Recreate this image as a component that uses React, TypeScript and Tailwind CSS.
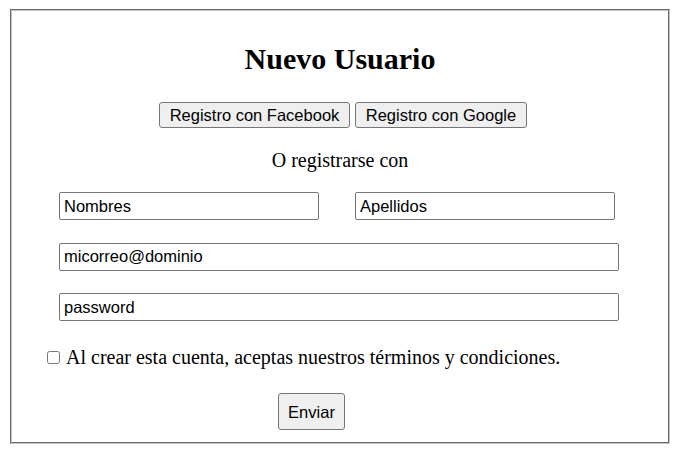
import * as React from 'react';

const sans = "font-['Liberation_Sans',Arial,sans-serif]";
const serif = "font-['Liberation_Serif','Times_New_Roman',serif]";

function Field({ placeholder, className = '' }: { placeholder: string; className?: string }) {
  return (
    <input
      type="text"
      defaultValue={placeholder}
      className={`h-[28px] border border-[#767676] rounded-[2px] bg-white px-[4px] text-[16.5px] text-black outline-none ${sans} ${className}`}
    />
  );
}

function GrayButton({ children, className = '' }: React.PropsWithChildren<{ className?: string }>) {
  return (
    <button
      type="button"
      className={`border border-[#767676] rounded-[3px] bg-[#efefef] text-[16.5px] text-black leading-[18px] px-0 ${sans} ${className}`}
    >
      {children}
    </button>
  );
}

export default function App() {
  return (
    <div className="bg-white w-[683px] h-[454px] pt-[9px] pl-[10px]">
      <form
        className={`w-[660px] h-[435px] border-2 [border-style:groove] border-[#c0c0c0] flex flex-col ${serif} text-black`}
        onSubmit={(e) => e.preventDefault()}
      >
        <h1 className="mt-[30px] text-center text-[30px] leading-[35px] font-bold">Nuevo Usuario</h1>

        <div className="mt-[26px] flex justify-center gap-[5px] pl-[6px]">
          <GrayButton className="h-[26px] w-[191px]">Registro con Facebook</GrayButton>
          <GrayButton className="h-[26px] w-[172px]">Registro con Google</GrayButton>
        </div>

        <p className="mt-[21px] text-center text-[20px] leading-[23px]">O registrarse con</p>

        <div className="mt-[20px] pl-[47px] flex flex-col gap-[22.5px]">
          <div className="flex gap-[36px]">
            <Field placeholder="Nombres" className="w-[260px]" />
            <Field placeholder="Apellidos" className="w-[260px]" />
          </div>
          <Field placeholder="micorreo@dominio" className="w-[560px]" />
          <Field placeholder="password" className="w-[560px]" />
        </div>

        <label className="mt-[25px] ml-[35px] flex items-center gap-[6px] text-[20px] leading-[23px]">
          <input type="checkbox" className="w-[13px] h-[13px] m-0 accent-white" />
          <span>Al crear esta cuenta, aceptas nuestros términos y condiciones.</span>
        </label>

        <div className="mt-[24px] pl-[266px]">
          <GrayButton className="h-[37px] w-[67px]">Enviar</GrayButton>
        </div>
      </form>
    </div>
  );
}
